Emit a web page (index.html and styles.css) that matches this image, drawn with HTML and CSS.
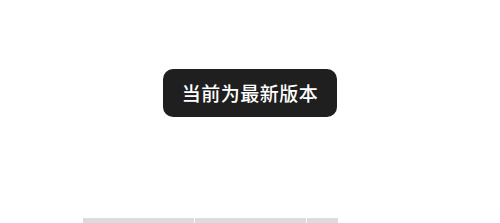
FILE: index.html
```html
<!DOCTYPE html>
<html lang="zh-CN">
  <head>
    <meta charset="UTF-8" />
    <meta name="viewport" content="width=device-width, initial-scale=1.0" />
    <title>检查更新</title>
    <link rel="stylesheet" href="styles.css">
  </head>
  <body>
    <div class="page">
      <div class="toast">当前为最新版本</div>
      <div class="tabs">
        <div class="tab wide"></div>
        <div class="tab wide"></div>
        <div class="tab small"></div>
      </div>
    </div>
  </body>
</html>
```

FILE: styles.css
```css
body {
  margin: 0;
  font-family: "Noto Sans CJK SC", "Noto Sans", sans-serif;
  background-color: #fff;
}

.page {
  height: 223px;
  overflow: hidden;
  display: flex;
  flex-direction: column;
  align-items: center;
}

.toast {
  margin-top: 69px;
  width: 174px;
  height: 48px;
  box-sizing: border-box;
  border-radius: 10px;
  background-color: #1f1f1f;
  color: #fff;
  font-size: 19px;
  font-weight: 500;
  line-height: 48px;
  text-align: center;
  letter-spacing: 0.5px;
}

.tabs {
  display: flex;
  gap: 1px;
  margin-top: 101px;
  margin-left: -79px;
}

.tab {
  height: 8px;
  background-color: #dcdcdc;
}

.tab.wide {
  width: 111px;
}

.tab.small {
  width: 31px;
}
```
